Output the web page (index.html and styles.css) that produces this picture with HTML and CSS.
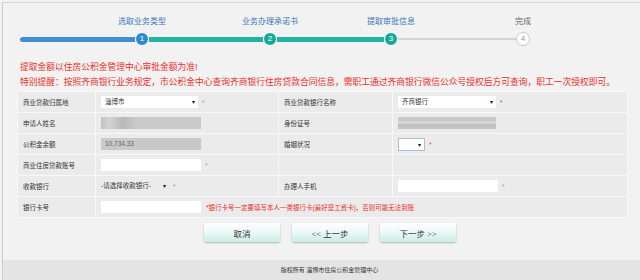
FILE: index.html
```html
<!DOCTYPE html>
<html lang="zh-CN">
<head>
  <meta charset="UTF-8">
  <title>提取审批信息</title>
  <link rel="stylesheet" href="styles.css">
</head>
<body>
<div class="page">
  <div class="steps">
    <div class="seg seg-1 blue"></div>
    <div class="node done-blue">
      <span class="step-label">选取业务类型</span>
      <span class="dot">1</span>
    </div>
    <div class="seg seg-2 teal"></div>
    <div class="node done-teal">
      <span class="step-label">业务办理承诺书</span>
      <span class="dot">2</span>
    </div>
    <div class="seg seg-3 teal"></div>
    <div class="node done-teal">
      <span class="step-label">提取审批信息</span>
      <span class="dot">3</span>
    </div>
    <div class="seg seg-4 gray"></div>
    <div class="node todo">
      <span class="step-label">完成</span>
      <span class="dot">4</span>
    </div>
  </div>

  <div class="notice">
    <p>提取金额以住房公积金管理中心审批金额为准!</p>
    <p>特别提醒：按照齐商银行业务规定，市公积金中心查询齐商银行住房贷款合同信息，需职工通过齐商银行微信公众号授权后方可查询，职工一次授权即可。</p>
  </div>

  <table class="form-table">
    <colgroup>
      <col class="c-label">
      <col class="c-value">
      <col class="c-label2">
      <col>
    </colgroup>
    <tr>
      <td>商业贷款归属地</td>
      <td><span class="select w-city">淄博市<i class="arrow">▾</i></span><span class="req">*</span></td>
      <td>商业贷款银行名称</td>
      <td><span class="select w-bank">齐商银行<i class="arrow">▾</i></span><span class="req red">*</span></td>
    </tr>
    <tr>
      <td>申请人姓名</td>
      <td><span class="readonly blur-name"></span></td>
      <td>身份证号</td>
      <td><span class="readonly blur-id"></span></td>
    </tr>
    <tr>
      <td>公积金余额</td>
      <td><span class="readonly">10,734.33</span></td>
      <td>婚姻状况</td>
      <td><span class="select w-small"><i class="arrow">▾</i></span><span class="req red">*</span></td>
    </tr>
    <tr>
      <td>商业住房贷款账号</td>
      <td><span class="input"></span><span class="req">*</span></td>
      <td></td>
      <td></td>
    </tr>
    <tr>
      <td>收款银行</td>
      <td><span class="select plain">-请选择收款银行-<i class="arrow">▾</i></span><span class="req">*</span></td>
      <td>办理人手机</td>
      <td><span class="input"></span><span class="req">*</span></td>
    </tr>
    <tr>
      <td>银行卡号</td>
      <td colspan="3"><span class="input"></span><span class="tip">*银行卡号一定要填写本人一类银行卡(最好是工资卡)，否则可能无法到账</span></td>
    </tr>
  </table>

  <div class="actions">
    <button class="btn">取消</button>
    <button class="btn">&lt;&lt; 上一步</button>
    <button class="btn">下一步 &gt;&gt;</button>
  </div>

  <div class="footer">版权所有 淄博市住房公积金管理中心</div>
</div>
</body>
</html>
```

FILE: styles.css
```css
body {
  margin: 0;
  padding: 0;
  background-color: #f2f2f2;
  font-family: "Liberation Sans", "Noto Sans CJK SC", sans-serif;
  color: #333;
}
.page {
  margin: 2px 0 0 2px;
  height: 278px;
  border-top: 1px solid #d6d6d6;
  border-left: 1px solid #c4ccd6;
  box-sizing: border-box;
  display: flex;
  flex-direction: column;
}

/* steps */
.steps {
  display: flex;
  align-items: flex-end;
  padding: 13px 0 0 17px;
}
.seg {
  height: 5px;
  margin-bottom: 4px;
}
.seg-1 { width: 115px; border-radius: 3px 0 0 3px; }
.seg-2 { width: 114px; }
.seg-3 { width: 107px; }
.seg-4 { width: 118px; height: 2px; margin-bottom: 6px; }
.blue { background-color: #3f8fd2; }
.teal { background-color: #22b2a4; }
.gray { background-color: #d4d4d4; }
.node {
  width: 14px;
  display: flex;
  flex-direction: column;
  align-items: center;
}
.step-label {
  white-space: nowrap;
  font-size: 8px;
  line-height: 11px;
  margin-bottom: 5px;
  color: #3c78b8;
}
.dot {
  width: 12px;
  height: 12px;
  border: 1px solid #fff;
  border-radius: 50%;
  font-size: 8px;
  line-height: 12px;
  text-align: center;
  color: #fff;
}
.done-blue .dot { background-color: #2a8ccc; }
.done-teal .dot { background-color: #17a898; }
.todo .dot {
  background-color: #fff;
  border-color: #c8c8c8;
  color: #999;
}
.todo .step-label { color: #666; }

/* notice */
.notice {
  margin: 14px 0 0 17px;
  color: #e8302a;
  font-size: 8.75px;
  line-height: 15px;
}
.notice p {
  margin: 0;
}

/* table */
.form-table {
  margin: 1px 0 0 14px;
  width: 611px;
  border-collapse: collapse;
  table-layout: fixed;
  font-size: 6.5px;
}
.c-label { width: 78px; }
.c-value { width: 183px; }
.c-label2 { width: 114px; }
.form-table td {
  height: 20px;
  padding: 0 0 0 5px;
  background-color: #ebebeb;
  border: 1px solid #f8f8f8;
  white-space: nowrap;
}
.select, .input, .readonly {
  display: inline-block;
  position: relative;
  height: 12px;
  line-height: 12px;
  vertical-align: middle;
  box-sizing: border-box;
  padding-left: 4px;
  font-size: 6.5px;
  color: #333;
  background-color: #fff;
}
.w-city { width: 97px; }
.w-bank { width: 98px; }
.w-small {
  width: 27px;
  height: 13px;
  border: 1px solid #a9bfd6;
}
.plain {
  background-color: transparent;
  width: 68px;
  padding-left: 0;
}
.arrow {
  position: absolute;
  right: 3px;
  top: 0;
  font-style: normal;
  font-size: 6px;
  color: #111;
}
.input {
  width: 100px;
}
.readonly {
  width: 100px;
  background-color: #c9c9c9;
  color: #666;
}
.blur-name {
  background: linear-gradient(90deg, #c2c2c2 0, #d4d4d4 8px, #b8b8b8 22px, #c9c9c9 34px, #c9c9c9 100%);
}
.blur-id {
  width: 98px;
  background: linear-gradient(180deg, #c8c8c8 0, #c8c8c8 4px, #e2e2e2 5px, #bdbdbd 8px, #c8c8c8 100%);
}
.req {
  margin-left: 4px;
  vertical-align: middle;
  color: #a0a0a0;
}
.req.red {
  color: #e05050;
}
.tip {
  margin-left: 5px;
  vertical-align: middle;
  color: #e8302a;
}

/* buttons */
.actions {
  display: flex;
  justify-content: center;
  gap: 12px;
  margin-top: 5px;
  padding-left: 17px;
}
.btn {
  width: 76px;
  height: 19px;
  padding: 0;
  border: none;
  border-radius: 2px;
  background: linear-gradient(180deg, #ffffff 0%, #eef9f7 45%, #c9ede6 100%);
  box-shadow: 0 1px 2px rgba(0, 0, 0, 0.25);
  font-family: "Liberation Serif", "Noto Sans CJK SC", serif;
  font-size: 8.5px;
  color: #333;
  cursor: pointer;
}

/* footer */
.footer {
  margin-top: auto;
  height: 20px;
  line-height: 20px;
  background-color: #e4e4e4;
  text-align: center;
  font-size: 6px;
  color: #333;
  padding-left: 16px;
}
```
